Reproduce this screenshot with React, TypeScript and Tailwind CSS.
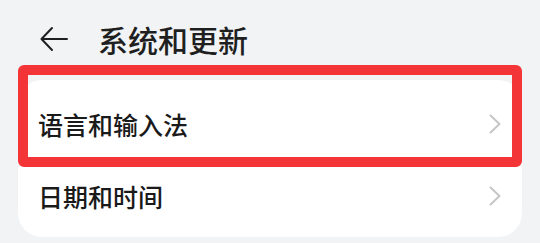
import React from "react";

export default function App() {
  return (
    <div
      className="w-[540px] h-[243px] bg-[#f1f3f5] overflow-hidden"
      style={{ fontFamily: '"Noto Sans CJK SC", "Noto Sans", sans-serif' }}
    >
      <div className="h-[80px] flex items-center pl-[40px] pb-[3px]">
        <svg width="28" height="26" viewBox="0 0 28 26" className="shrink-0">
          <path d="M27 13H2M12 2L1.5 13L12 24" fill="none" stroke="#1f1f1f" strokeWidth="2" strokeLinecap="round" strokeLinejoin="round" />
        </svg>
        <div className="ml-[30px] text-[30px] leading-none font-medium text-[#1f1f1f]">系统和更新</div>
      </div>
      <div className="relative mx-[18px]">
        <div className="bg-white rounded-[24px] pt-[8px] pb-[5px]">
          {["语言和输入法", "日期和时间"].map((t) => (
            <div key={t} className="h-[72px] flex items-center justify-between pl-[20px] pr-[21px]">
              <span className="text-[25px] leading-none font-medium text-[#1a1a1a]">{t}</span>
              <svg width="12" height="20" viewBox="0 0 12 20">
                <path d="M1.5 1.5L10.5 10L1.5 18.5" fill="none" stroke="#c6c6c6" strokeWidth="2" strokeLinecap="round" strokeLinejoin="round" />
              </svg>
            </div>
          ))}
        </div>
        <div className="absolute left-0 right-0 top-[-15px] h-[102px] border-[10px] border-[#f33538] rounded-[6px] pointer-events-none" />
      </div>
    </div>
  );
}
